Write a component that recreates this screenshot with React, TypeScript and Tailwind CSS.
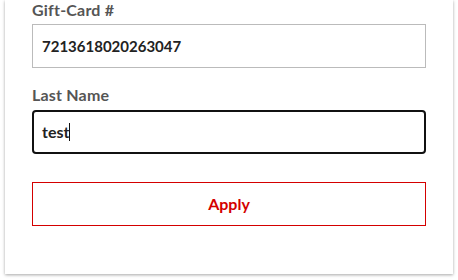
export default function App() {
  return (
    <div className="w-[458px] h-[280px] bg-white overflow-hidden" style={{ fontFamily: 'Lato, "Open Sans", sans-serif' }}>
      <div className="ml-[5px] w-[448px] h-[274px] bg-white shadow-[0_1px_3px_rgba(0,0,0,0.35)] px-[27px] flex flex-col">
        <label className="block text-[16px] leading-[20px] font-bold text-[#555] tracking-[0.2px]">Gift-Card #</label>
        <input
          readOnly
          value="7213618020263047"
          className="mt-[4px] h-[44px] w-full border border-[#bbb] px-[9px] text-[15px] font-bold text-[#222] outline-none"
        />
        <label className="mt-[17px] block text-[16px] leading-[20px] font-bold text-[#555] tracking-[0.2px]">Last Name</label>
        <div className="mt-[5px] h-[44px] w-full border-2 border-[#111] rounded-[4px] px-[8px] flex items-center text-[16px] font-bold text-[#222]">
          <span>test</span>
          <span className="w-px h-[18px] bg-[#111]" />
        </div>
        <button className="mt-[28px] h-[44px] w-full border border-[#d40000] text-[#d40000] text-[16px] font-bold">
          Apply
        </button>
      </div>
    </div>
  );
}
